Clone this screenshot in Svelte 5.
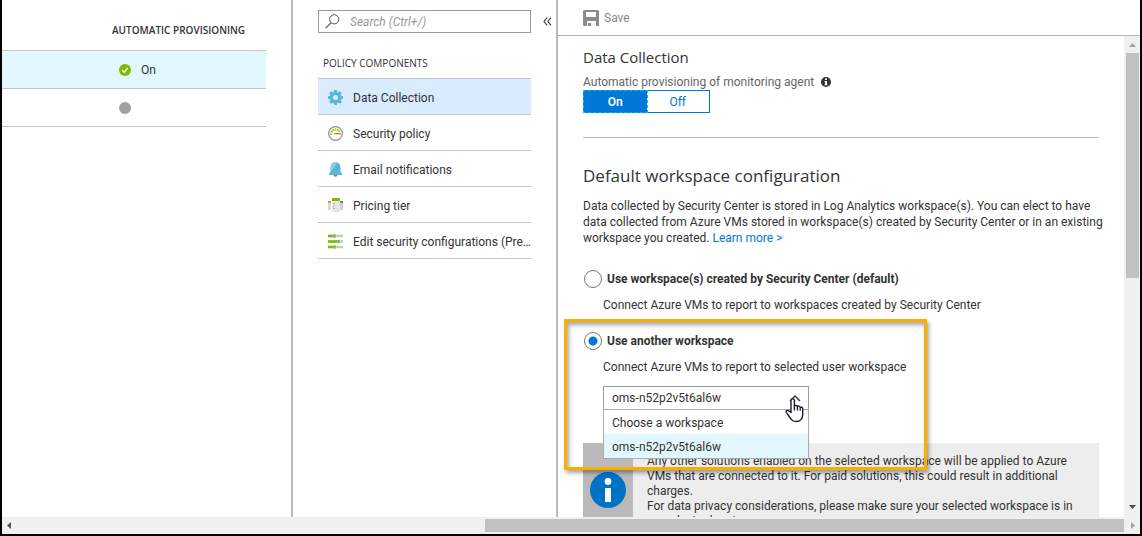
<script>
  const rows = [{ on: true }, { on: false }];
  const items = [
    { id: 'gear', label: 'Data Collection' },
    { id: 'gauge', label: 'Security policy' },
    { id: 'bell', label: 'Email notifications' },
    { id: 'tier', label: 'Pricing tier' },
    { id: 'sliders', label: 'Edit security configurations (Preview)' }
  ];
  const workspaces = ['Choose a workspace', 'oms-n52p2v5t6al6w'];
  let active = $state('gear');
  let provisioning = $state('On');
  let mode = $state('other');
  let workspace = $state('oms-n52p2v5t6al6w');
</script>

<div class="shell">
  <div class="blades">
    <section class="blade subscriptions">
      <table>
        <thead><tr><th>AUTOMATIC PROVISIONING</th></tr></thead>
        <tbody>
          {#each rows as row}
            <tr class:selected={row.on}>
              <td>
                <div class="status">
                  <svg width="12" height="12" viewBox="0 0 12 12" aria-hidden="true">
                    <circle cx="6" cy="6" r="6" fill={row.on ? '#7fba00' : '#a0a1a2'} />
                    {#if row.on}<path d="M3.2 6.2 5.2 8.2 8.8 3.8" fill="none" stroke="#fff" stroke-width="1.3" />{/if}
                  </svg>
                  {#if row.on}<span>On</span>{/if}
                </div>
              </td>
            </tr>
          {/each}
        </tbody>
      </table>
    </section>

    <nav class="blade menu">
      <div class="searchrow">
        <div class="search">
          <svg width="15" height="15" viewBox="0 0 15 15" aria-hidden="true">
            <circle cx="9.2" cy="5.3" r="4.6" fill="none" stroke="#555" />
            <path d="M6 8.8.6 14.2" stroke="#555" stroke-width="1.2" />
          </svg>
          <input type="text" placeholder="Search (Ctrl+/)" aria-label="Search" />
        </div>
        <button class="collapse" aria-label="Collapse menu">
          <svg width="9" height="9" viewBox="0 0 9 9" aria-hidden="true">
            <path d="M4.2.7 1 4.5 4.2 8.3M8 .7 4.8 4.5 8 8.3" fill="none" stroke="#333" stroke-width="1.1" />
          </svg>
        </button>
      </div>
      <h3>POLICY COMPONENTS</h3>
      <ul class="items">
        {#each items as item}
          <li>
            <button class="item" class:active={active === item.id} onclick={() => (active = item.id)}>
              <svg width="15" height="15" viewBox="0 0 15 15" aria-hidden="true">
                {#if item.id === 'gear'}
                  <g fill="#59b4d9">
                    {#each [0, 45, 90, 135, 180, 225, 270, 315] as a}
                      <path d="M5.6 2.6 6.2 0h2.6l.6 2.6z" transform="rotate({a} 7.5 7.5)" />
                    {/each}
                  </g>
                  <circle cx="7.5" cy="7.5" r="4" fill="none" stroke="#59b4d9" stroke-width="3" />
                {:else if item.id === 'gauge'}
                  <circle cx="7.5" cy="7.5" r="6.8" fill="#fff" stroke="#8f8f8f" stroke-width="1.2" />
                  <path d="M3.4 9A4.4 4.4 0 0 1 7.5 3.4a4.4 4.4 0 0 1 4 2.6" fill="none" stroke="#a8cf38" stroke-width="2.2" stroke-dasharray="1.8 .5" />
                  <path d="M6.3 7h6.5v1.4H6.3z" fill="#e8731a" />
                {:else if item.id === 'bell'}
                  <path d="M7.5.3C4 .3 2.6 2.8 2.6 5.8v3.9L1 11.8V13h13v-1.2l-1.6-2.1V5.8c0-3-1.4-5.5-4.9-5.5z" fill="#59b4d9" />
                  <path d="M7.5.3C4 .3 2.6 2.8 2.6 5.8v3.9L1.4 11.4 9.6.8A5.6 5.6 0 0 0 7.5.3z" fill="#8ccbe5" />
                  <path d="M5.7 13h3.6a1.8 1.8 0 0 1-3.6 0z" fill="#7a7a7a" />
                {:else if item.id === 'tier'}
                  <path d="M0 3h3v2H0z" fill="#ff8c00" />
                  <path d="M0 5h3v7H0z" fill="#d9d9d9" />
                  <path d="M12 3h3v2h-3z" fill="#3999c6" />
                  <path d="M12 5h3v7h-3z" fill="#cfcfcf" />
                  <path d="M4 3h8v11H4z" fill="#e6e6e6" />
                  <path d="M4 0h8v3H4z" fill="#7fba00" />
                  <path d="m5.5 6 1-1M5.5 8.5l1-1M5.500 11l1-1" stroke="#777" />
                {:else}
                  <path d="M0 2h15M0 7.500h15M0 13h15" stroke="#b8d997" stroke-width="2.6" />
                  <path d="M0 2h5M0 7.500h9M0 13h5" stroke="#7fba00" stroke-width="2.6" />
                  <path d="M5.500.2h2v3.600h-2zM9.500 5.700h2v3.600h-2zM5.500 11.200h2v3.600h-2z" fill="#8a9a7a" />
                {/if}
              </svg>
              <span>{item.label}</span>
            </button>
          </li>
        {/each}
      </ul>
    </nav>

    <section class="blade detail">
      <div class="toolbar">
        <button class="save">
          <svg width="16" height="16" viewBox="0 0 16 16" aria-hidden="true">
            <path fill="#8c8c8c" fill-rule="evenodd" d="M1 0h14l1 1v15h-3v-5H4v5H1l-1-1V1zM3 2v5h10V2zM5 13h3v3H5z" />
          </svg>
          <span>Save</span>
        </button>
      </div>
      <div class="body">
        <div class="content">
          <h1>Data Collection</h1>
          <div class="label">
            <span>Automatic provisioning of monitoring agent</span>
            <svg width="10" height="10" viewBox="0 0 10 10" aria-hidden="true">
              <circle cx="5" cy="5" r="5" fill="#333" />
              <path d="M4 1.500h2v1.500H4zM3.500 4H6v3.200h.7V8.200H3.400V7.200H4V5h-.5z" fill="#fff" />
            </svg>
          </div>
          <div class="toggle">
            {#each ['On', 'Off'] as value}
              <button class:chosen={provisioning === value} onclick={() => (provisioning = value)}>{value}</button>
            {/each}
          </div>
          <hr />
          <h2>Default workspace configuration</h2>
          <p class="intro">
            Data collected by Security Center is stored in Log Analytics workspace(s). You can elect to have<br />
            data collected from Azure VMs stored in workspace(s) created by Security Center or in an existing<br />
            workspace you created. <a href="#learn">Learn more &gt;</a>
          </p>

          <div class="option">
            <label><input type="radio" name="mode" value="default" bind:group={mode} />Use workspace(s) created by Security Center (default)</label>
            <p>Connect Azure VMs to report to workspaces created by Security Center</p>
          </div>

          <div class="option">
            <label><input type="radio" name="mode" value="other" bind:group={mode} />Use another workspace</label>
            <p>Connect Azure VMs to report to selected user workspace</p>
            <div class="picker">
              <select aria-label="Workspace" bind:value={workspace}>
                {#each workspaces as name}<option>{name}</option>{/each}
              </select>
              <svg class="chevron" width="12" height="7" viewBox="0 0 12 7" aria-hidden="true">
                <path d="M1 6 6 1l5 5" fill="none" stroke="#333" stroke-width="1.4" />
              </svg>
              <ul class="list" role="listbox" aria-label="Workspaces">
                {#each workspaces as name}
                  <li role="option" aria-selected={workspace === name}>{name}</li>
                {/each}
              </ul>
              <svg class="pointer" width="19" height="25" viewBox="0 0 19 25" aria-hidden="true">
                <path
                  d="M6 14.500V2.600a1.700 1.700 0 0 1 3.400 0V8.300c.3-1.300 2.800-1.200 3 .4.5-1 2.600-.8 2.800.8.6-.7 2.500-.4 2.500 1.300v5.700c0 4-2.400 7-6.500 7-3.300 0-5-1.600-6.300-4L1.300 14.300c-.6-1.300.9-2.500 2.200-1.600z"
                  fill="#fff" stroke="#1a1a2e" stroke-width="1.4" stroke-linejoin="round" />
                <path d="M9.400 8v4.500M12.400 8.800v3.700M15.200 9.700v3" stroke="#1a1a2e" stroke-width="1.3" />
              </svg>
            </div>
            <div class="frame"></div>
          </div>

          <div class="notice">
            <div class="badge">
              <svg width="36" height="36" viewBox="0 0 36 36" aria-hidden="true">
                <circle cx="18" cy="18" r="18" fill="#0072c6" />
                <circle cx="18" cy="9.500" r="3.400" fill="#fff" />
                <path d="M15 16h6v14h-6z" fill="#fff" />
              </svg>
            </div>
            <p>
              Any other solutions enabled on the selected workspace will be applied to Azure<br />
              VMs that are connected to it. For paid solutions, this could result in additional<br />
              charges.<br />
              For data privacy considerations, please make sure your selected workspace is in<br />
              your desired region.
            </p>
          </div>
        </div>
        <div class="vbar">
          <svg width="7" height="4" viewBox="0 0 7 4" aria-hidden="true"><path d="M0 4 3.500 0 7 4z" fill="#a3a3a3" /></svg>
          <div class="vthumb"></div>
          <svg width="7" height="4" viewBox="0 0 7 4" aria-hidden="true"><path d="M0 0h7L3.500 4z" fill="#505050" /></svg>
        </div>
      </div>
    </section>
  </div>
  <div class="hbar">
    <svg width="4" height="7" viewBox="0 0 4 7" aria-hidden="true"><path d="M4 0v7L0 3.500z" fill="#505050" /></svg>
    <div class="hthumb"></div>
    <svg width="4" height="7" viewBox="0 0 4 7" aria-hidden="true"><path d="M0 0v7l4-3.500z" fill="#a3a3a3" /></svg>
  </div>
</div>

<style>
  :global(body) {
    margin: 0;
  }
  .shell,
  .shell * {
    box-sizing: border-box;
  }
  .shell {
    display: flex;
    flex-direction: column;
    height: 100vh;
    overflow: hidden;
    border: solid #000;
    border-width: 0 2px 2px;
    background: #fff;
    color: #333;
    font: 12px/16px Roboto, 'Open Sans', sans-serif;
  }
  button,
  input,
  select {
    font: inherit;
    color: inherit;
  }
  button {
    margin: 0;
    padding: 0;
    border: 0;
    background: none;
  }
  ul,
  p,
  h1,
  h2,
  h3 {
    margin: 0;
    padding: 0;
    list-style: none;
    font-weight: 400;
  }
  h1,
  h2,
  h3,
  th {
    font-family: 'Open Sans', 'Noto Sans', sans-serif;
  }
  svg {
    display: block;
    flex: none;
  }
  .blades {
    flex: 1;
    min-height: 0;
    display: grid;
    grid-template-columns: 291px 265px minmax(0, 1fr);
    grid-template-rows: minmax(0, 1fr);
  }
  .blade {
    min-width: 0;
  }
  .subscriptions {
    padding: 10px 25px 0 0;
    border-right: 2px solid #bababa;
  }
  table {
    width: 100%;
    border-collapse: separate;
    border-spacing: 0;
  }
  th {
    height: 41px;
    padding: 0 0 0 110px;
    border-bottom: 1px solid #c4c4c4;
    text-align: left;
    font-size: 10px;
    font-weight: 600;
    white-space: nowrap;
  }
  td {
    height: 38px;
    padding: 0 0 0 117px;
    border-bottom: 1px solid #c4c4c4;
  }
  .selected {
    background: #e3f7fe;
  }
  .status {
    display: flex;
    align-items: center;
    gap: 10px;
  }
  .menu {
    padding: 10px 0 0 25px;
    border-right: 2px solid #bababa;
  }
  .searchrow {
    display: flex;
    align-items: center;
    gap: 12px;
  }
  .search {
    display: flex;
    align-items: center;
    gap: 10px;
    width: 213px;
    height: 23px;
    padding-left: 6px;
    border: 1px solid #999;
  }
  .search input {
    flex: 1;
    min-width: 0;
    padding: 0;
    border: 0;
    outline: 0;
    background: none;
  }
  .search input::placeholder {
    color: #999;
    font-style: italic;
    opacity: 1;
  }
  h3 {
    padding: 22px 0 7px 5px;
    font-size: 10px;
  }
  .items {
    width: 213px;
    border-top: 1px solid #c4c4c4;
  }
  .item {
    display: flex;
    align-items: center;
    gap: 10px;
    width: 100%;
    height: 36px;
    padding: 1px 0 0 10px;
    border-bottom: 1px solid #c4c4c4;
    text-align: left;
  }
  .item span {
    overflow: hidden;
    text-overflow: ellipsis;
    white-space: nowrap;
    line-height: 18px;
    padding-top: 1px;
  }
  .item.active {
    background: #d9ecff;
  }
  .detail {
    display: flex;
    flex-direction: column;
  }
  .toolbar {
    display: flex;
    flex: none;
    align-items: center;
    height: 36px;
    padding: 1px 0 0 25px;
    border-bottom: 1px solid #b3b3b3;
  }
  .save {
    display: flex;
    align-items: center;
    gap: 5px;
    line-height: 18px;
    color: #888;
  }
  .body {
    flex: 1;
    min-height: 0;
    display: flex;
    overflow: hidden;
  }
  .content {
    flex: 1;
    min-width: 0;
    padding: 11px 25px 0;
    white-space: nowrap;
  }
  h1 {
    font-size: 15px;
    line-height: 20px;
  }
  .label {
    display: flex;
    align-items: center;
    gap: 7px;
    height: 16px;
    margin-top: 7px;
    line-height: 18px;
    color: #666;
  }
  .toggle {
    display: flex;
    width: 127px;
    height: 23px;
    border: 1px solid #0078d7;
  }
  .toggle button {
    flex: 1;
    color: #0078d7;
  }
  .toggle .chosen {
    background: #0078d7;
    color: #fff;
    font-weight: 600;
    outline: 1px dashed #00bcf2;
  }
  hr {
    margin: 24px 0 26px;
    border: 0;
    border-top: 1px solid #bababa;
  }
  h2 {
    font-size: 17px;
    line-height: 24px;
  }
  .intro {
    margin: 10px 0 24px;
  }
  a {
    color: #0078d7;
    text-decoration: none;
  }
  .option {
    position: relative;
    padding-bottom: 19px;
  }
  .option label {
    display: flex;
    align-items: center;
    gap: 5px;
    height: 18px;
    line-height: 18px;
    font-weight: 700;
  }
  .option input {
    appearance: none;
    width: 18px;
    height: 18px;
    margin: 0;
    margin-left: 1px;
    border: 1px solid #777;
    border-radius: 50%;
    background: #fff;
  }
  .option input:checked {
    background: radial-gradient(circle, #0078d7 4px, #fff 5px);
  }
  .option p {
    padding: 9px 0 0 20px;
  }
  .picker {
    position: relative;
    width: 206px;
    margin: 11px 0 0 20px;
  }
  select {
    display: block;
    appearance: none;
    width: 100%;
    height: 24px;
    padding: 0 8px;
    border: 1px solid #999;
    border-radius: 0;
    background: #fff;
  }
  .chevron {
    position: absolute;
    top: 9px;
    right: 8px;
  }
  .list {
    position: absolute;
    z-index: 2;
    top: 23px;
    left: 0;
    right: 0;
    border: 1px solid #aaa;
    background: #fff;
  }
  .list li {
    height: 24px;
    padding: 0 8px;
    line-height: 26px;
  }
  .list li[aria-selected='true'] {
    background: #e3f7fe;
  }
  .pointer {
    position: absolute;
    z-index: 3;
    top: 12px;
    left: 182px;
  }
  .frame {
    position: absolute;
    z-index: 1;
    top: -13px;
    left: -19px;
    width: 363px;
    height: 151px;
    border: 3px solid #fbad00;
    box-shadow: 2px 3px 4px rgba(0, 0, 0, 0.35), inset 2px 3px 4px rgba(0, 0, 0, 0.35);
    pointer-events: none;
  }
  .notice {
    display: flex;
    height: 100px;
    margin-top: 14px;
    background: #ededed;
  }
  .badge {
    width: 50px;
    padding: 29px 7px 0;
    background: #bababa;
  }
  .notice p {
    padding: 11px 0 0 14px;
    line-height: 15px;
  }
  .vbar {
    display: flex;
    flex: none;
    flex-direction: column;
    align-items: center;
    width: 16px;
    padding: 7px 0 8px;
    background: #f0f0f0;
  }
  .vthumb {
    width: 13px;
    height: 225px;
    margin: 6px 0 auto;
    background: #c1c1c1;
  }
  .hbar {
    display: flex;
    flex: none;
    align-items: center;
    height: 17px;
    padding: 0 5px;
    background: #f0f0f0;
  }
  .hthumb {
    flex: 1;
    height: 13px;
    margin: 0 7px 0 42%;
    background: #c1c1c1;
  }
</style>
